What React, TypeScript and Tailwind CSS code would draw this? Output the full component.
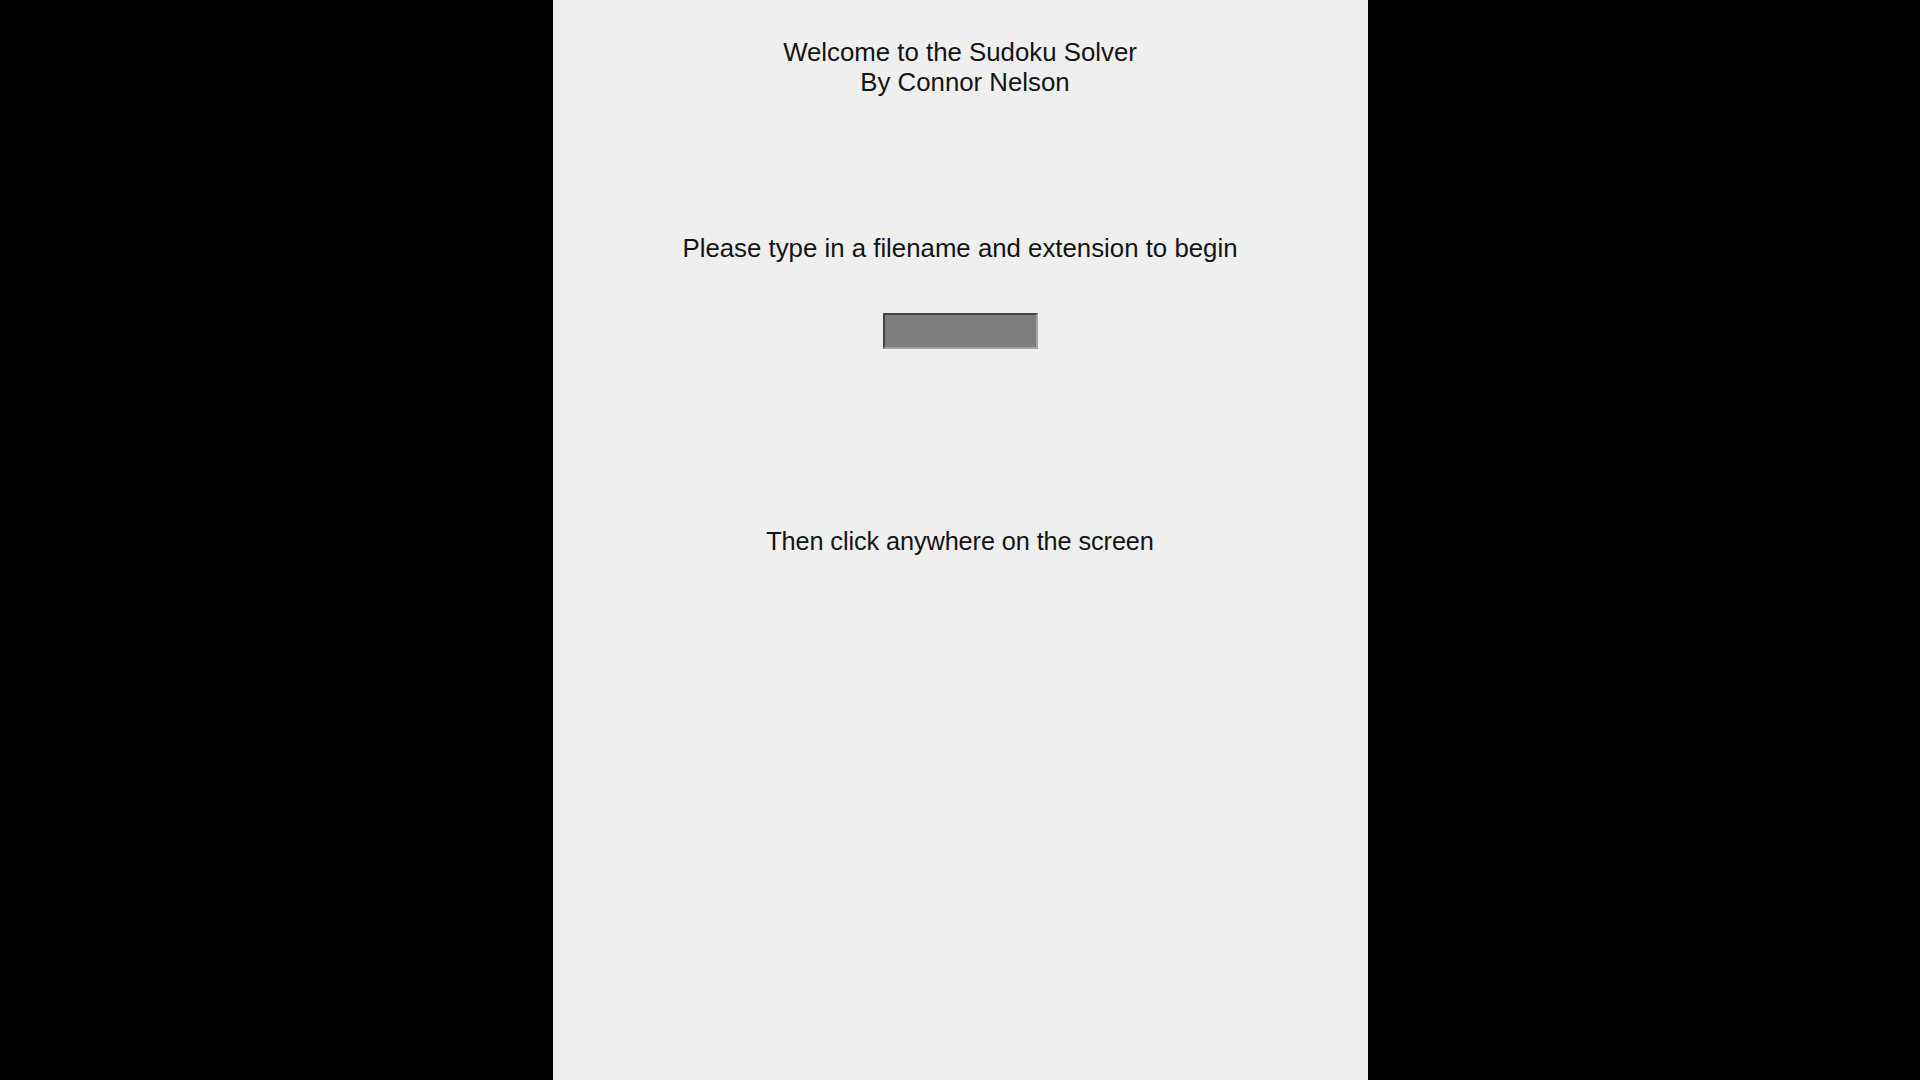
import React, { useState } from 'react';

const App: React.FC = () => {
  const [filename, setFilename] = useState('');

  return (
    <div className="w-full h-[1080px] bg-black flex justify-center overflow-hidden">
      <div
        className="w-[815px] h-full bg-[#efefef] text-[#141414] text-[25.8px] leading-[30px] flex flex-col items-center pt-[37px]"
        style={{ fontFamily: '"Liberation Sans", Arial, sans-serif' }}
      >
        {/* Title */}
        <div className="flex flex-col items-center">
          <p>Welcome to the Sudoku Solver</p>
          <p className="pl-[10px]">By Connor Nelson</p>
        </div>

        <p className="mt-[136px]">Please type in a filename and extension to begin</p>

        <input
          type="text"
          value={filename}
          onChange={(e) => setFilename(e.target.value)}
          className="mt-[50px] w-[155px] h-[36px] bg-[#7d7d7d] border-2 border-t-[#454545] border-l-[#454545] border-r-[#a5a5a5] border-b-[#a5a5a5] outline-none text-white text-base px-1"
        />

        <p className="mt-[177px] text-[25.3px] tracking-[-0.1px]">Then click anywhere on the screen</p>
      </div>
    </div>
  );
};

export default App;
